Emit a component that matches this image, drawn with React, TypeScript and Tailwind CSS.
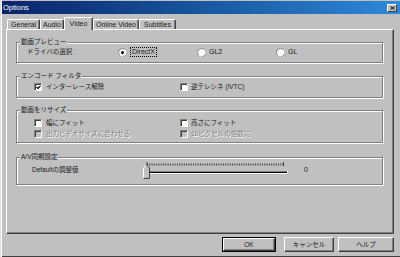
import React from 'react';

const font = "font-['Liberation_Sans','Noto_Sans_CJK_JP',sans-serif]";

function CheckBox({ checked = false, disabled = false }: { checked?: boolean; disabled?: boolean }) {
  return (
    <span
      className={`relative inline-block w-[8px] h-[8px] shrink-0 border-t border-l border-[#808080] border-r border-b border-r-white border-b-white shadow-[inset_1px_1px_0_#404040] ${
        disabled ? 'bg-[#c0c0c0]' : 'bg-white'
      }`}
    >
      {checked && (
        <svg className="absolute left-[1px] top-[1px]" width="5" height="5" viewBox="0 0 5 5">
          <path d="M0.5 2 L2 3.5 L4.5 0.8" stroke="#000" strokeWidth="1.2" fill="none" />
        </svg>
      )}
    </span>
  );
}

function Radio({ checked = false }: { checked?: boolean }) {
  return (
    <svg width="9" height="9" viewBox="0 0 9 9" className="shrink-0">
      <circle cx="4.5" cy="4.5" r="4" fill="#fff" stroke="#808080" strokeWidth="1" />
      <path d="M1.7 7.3 A4 4 0 0 0 7.3 1.7" stroke="#fff" strokeWidth="1" fill="none" />
      {checked && <circle cx="4.5" cy="4.5" r="1.5" fill="#000" />}
    </svg>
  );
}

function Group({ label, className, children }: { label: string; className: string; children: React.ReactNode }) {
  return (
    <div
      className={`relative ml-[9px] w-[367px] border border-[#808080] shadow-[inset_1px_1px_0_#fff,1px_1px_0_#fff] ${className}`}
    >
      <span className="absolute left-[3px] -top-[6px] bg-[#c0c0c0] px-[1px] leading-[10px]">{label}</span>
      {children}
    </div>
  );
}

function Tab({ label, width, selected = false }: { label: string; width: string; selected?: boolean }) {
  return (
    <div
      className={`${width} flex items-center justify-center border-t border-l border-white border-r border-r-[#404040] rounded-t-[2px] shadow-[inset_-1px_0_0_#808080] ${
        selected ? 'h-[13px] relative z-10 bg-[#c0c0c0] -mb-[1px]' : 'h-[10px]'
      }`}
    >
      <span className="leading-[10px] text-[7px]">{label}</span>
    </div>
  );
}

function Button({ label, width, isDefault = false }: { label: string; width: string; isDefault?: boolean }) {
  return (
    <div
      className={`${width} h-[15px] flex items-center justify-center ${
        isDefault ? 'border border-black' : ''
      }`}
    >
      <div className="w-full h-full flex items-center justify-center border-t border-l border-white border-r border-b border-r-[#404040] border-b-[#404040] shadow-[inset_-1px_-1px_0_#808080]">
        <span className="leading-[10px]">{label}</span>
      </div>
    </div>
  );
}

function Slider() {
  const ticks = [];
  for (let x = 4; x <= 140; x += 2.3) {
    ticks.push(<rect key={x} x={x} y={1.5} width={1} height={2} fill="#404040" />);
  }
  return (
    <svg width="146" height="18" viewBox="0 0 146 18" className="shrink-0">
      {ticks}
      <rect x={3.5} y={0} width={1} height={4} fill="#404040" />
      <rect x={140} y={0} width={1} height={4} fill="#404040" />
      <rect x={2} y={9} width={142} height={1} fill="#808080" />
      <rect x={2} y={10} width={142} height={1} fill="#000" />
      <rect x={2} y={11} width={143} height={1} fill="#fff" />
      <rect x={144} y={9} width={1} height={3} fill="#fff" />
      <polygon points="0.5,6 3.5,3 6.5,6 6.5,16.5 0.5,16.5" fill="#c0c0c0" />
      <polyline points="0.5,16.5 0.5,6 3.5,3" stroke="#fff" strokeWidth="1" fill="none" />
      <polyline points="3.5,3 6.5,6 6.5,16.5 0.5,16.5" stroke="#404040" strokeWidth="1" fill="none" />
    </svg>
  );
}

export default function App() {
  return (
    <div
      className={`w-[400px] h-[257px] bg-[#c0c0c0] flex flex-col overflow-hidden text-[6.5px] text-[#1a1a1a] ${font} shadow-[inset_1px_0_0_#dfdfdf,inset_2px_0_0_#fff,inset_0_-1px_0_#404040]`}
    >
      {/* Title bar */}
      <div className="mt-[1px] ml-[2px] h-[13px] flex items-center justify-between bg-gradient-to-r from-[#0a246a] to-[#2d8ad8] pl-[1px] pr-[3px]">
        <span className="text-white leading-[10px] text-[7.5px]">Options</span>
        <div className="w-[10px] h-[8px] bg-[#c0c0c0] border-t border-l border-white border-r border-b border-r-[#404040] border-b-[#404040] flex items-center justify-center">
          <svg width="5" height="4" viewBox="0 0 5 4">
            <path d="M0.5 0.5 L4.5 3.5 M4.5 0.5 L0.5 3.5" stroke="#000" strokeWidth="1" />
          </svg>
        </div>
      </div>

      {/* Tabs */}
      <div className="mt-[3px] h-[12px] pl-[7px] flex items-end">
        <Tab label="General" width="w-[33px]" />
        <Tab label="Audio" width="w-[24px]" />
        <Tab label="Video" width="w-[29px]" selected />
        <Tab label="Online Video" width="w-[46px]" />
        <Tab label="Subtitles" width="w-[37px]" />
      </div>

      {/* Panel */}
      <div className="ml-[6px] w-[388px] h-[205px] border-t border-l border-white border-r border-b border-r-[#404040] border-b-[#404040] shadow-[inset_-1px_-1px_0_#808080] flex flex-col">
        <Group label="動画プレビュー" className="mt-[12px] h-[21px] pt-[4px]">
          <div className="h-[10px] flex items-center pl-[10px]">
            <span className="w-[91px]">ドライバの選択</span>
            <div className="w-[79px] flex items-center gap-[3px] text-[7px]">
              <Radio checked />
              <span className="border border-dotted border-black px-[1px] leading-[8px]">DirectX</span>
            </div>
            <div className="w-[79px] flex items-center gap-[3px] text-[7px]">
              <Radio />
              <span>GL2</span>
            </div>
            <div className="flex items-center gap-[3px] text-[7px]">
              <Radio />
              <span>GL</span>
            </div>
          </div>
        </Group>

        <Group label="エンコード フィルタ" className="mt-[13px] h-[22px] pt-[5px]">
          <div className="h-[10px] flex items-center pl-[17px]">
            <div className="w-[146px] flex items-center gap-[4px]">
              <CheckBox checked />
              <span>インターレース解除</span>
            </div>
            <div className="flex items-center gap-[3px]">
              <CheckBox />
              <span>逆テレシネ (IVTC)</span>
            </div>
          </div>
        </Group>

        <Group label="動画をリサイズ" className="mt-[12px] h-[33px] pt-[6px]">
          <div className="h-[11px] flex items-center pl-[17px]">
            <div className="w-[146px] flex items-center gap-[4px]">
              <CheckBox />
              <span>幅にフィット</span>
            </div>
            <div className="flex items-center gap-[3px]">
              <CheckBox />
              <span>高さにフィット</span>
            </div>
          </div>
          <div className="h-[11px] flex items-center pl-[17px] text-[#808080] [text-shadow:1px_1px_0_#fff]">
            <div className="w-[146px] flex items-center gap-[4px]">
              <CheckBox disabled />
              <span>出力ビデオサイズに合わせる</span>
            </div>
            <div className="flex items-center gap-[3px]">
              <CheckBox disabled />
              <span>16ピクセルの倍数に</span>
            </div>
          </div>
        </Group>

        <Group label="A/V同期設定" className="mt-[14px] h-[28px] pt-[4px]">
          <div className="flex items-start pl-[15px]">
            <span className="w-[111px] mt-[3px] leading-[10px]">Defaultの調整値</span>
            <Slider />
            <span className="ml-[15px] mt-[3px] leading-[10px] text-[7px]">0</span>
          </div>
        </Group>
      </div>

      {/* Buttons */}
      <div className="mt-[3px] flex pl-[222px]">
        <Button label="OK" width="w-[54px]" isDefault />
        <div className="ml-[8px]">
          <Button label="キャンセル" width="w-[50px]" />
        </div>
        <div className="ml-[4px]">
          <Button label="ヘルプ" width="w-[56px]" />
        </div>
      </div>
    </div>
  );
}
